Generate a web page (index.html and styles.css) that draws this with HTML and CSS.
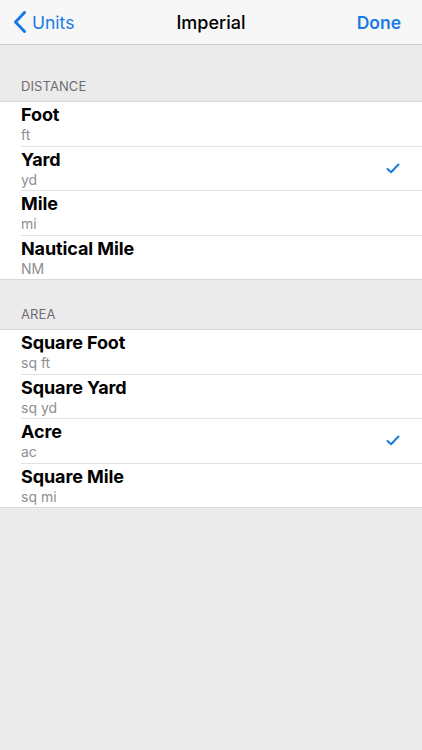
FILE: index.html
```html
<!DOCTYPE html>
<html>
<head>
<meta charset="utf-8">
<link rel="stylesheet" href="styles.css">
</head>
<body>
<div class="nav">
  <div class="back">
    <svg class="chev" width="14" height="22" viewBox="0 0 14 22"><path d="M11.5 1.5 L2.5 11 L11.5 20.5" fill="none" stroke="#1a7be6" stroke-width="3" stroke-linecap="round" stroke-linejoin="round"/></svg>
    <span>Units</span>
  </div>
  <div class="title">Imperial</div>
  <div class="done">Done</div>
</div>
<div class="section first">
  <div class="header">DISTANCE</div>
  <div class="list">
    <div class="row"><div class="txt"><div class="name">Foot</div><div class="abbr">ft</div></div></div>
    <div class="row"><div class="txt"><div class="name">Yard</div><div class="abbr">yd</div></div>
      <svg class="check" width="14" height="11" viewBox="0 0 14 11"><path d="M1.5 6 L5 9.2 L12.5 1.5" fill="none" stroke="#1a7be6" stroke-width="2" stroke-linecap="round" stroke-linejoin="round"/></svg></div>
    <div class="row"><div class="txt"><div class="name">Mile</div><div class="abbr">mi</div></div></div>
    <div class="row"><div class="txt"><div class="name">Nautical Mile</div><div class="abbr">NM</div></div></div>
  </div>
</div>
<div class="section">
  <div class="header">AREA</div>
  <div class="list">
    <div class="row"><div class="txt"><div class="name">Square Foot</div><div class="abbr">sq ft</div></div></div>
    <div class="row"><div class="txt"><div class="name">Square Yard</div><div class="abbr">sq yd</div></div></div>
    <div class="row"><div class="txt"><div class="name">Acre</div><div class="abbr">ac</div></div>
      <svg class="check" width="14" height="11" viewBox="0 0 14 11"><path d="M1.5 6 L5 9.2 L12.5 1.5" fill="none" stroke="#1a7be6" stroke-width="2" stroke-linecap="round" stroke-linejoin="round"/></svg></div>
    <div class="row"><div class="txt"><div class="name">Square Mile</div><div class="abbr">sq mi</div></div></div>
  </div>
</div>
</body>
</html>
```
FILE: styles.css
```css
html, body {
  margin: 0;
  padding: 0;
  background: #ebebeb;
  font-family: Inter, "Liberation Sans", sans-serif;
  width: 422px;
  height: 750px;
  overflow: hidden;
}
.nav {
  height: 44px;
  background: #f7f7f7;
  border-bottom: 1px solid #cfcfcf;
  display: flex;
  align-items: center;
  justify-content: space-between;
  padding: 0 21px 0 13px;
  position: relative;
}
.back {
  display: flex;
  align-items: center;
  gap: 5px;
  color: #1a7be6;
  font-size: 17.5px;
}
.chev { display: block; }
.title {
  position: absolute;
  left: 0;
  right: 0;
  text-align: center;
  font-size: 18px;
  font-weight: 500;
  color: #000;
  pointer-events: none;
}
.done {
  color: #1a7be6;
  font-size: 17.5px;
  font-weight: 600;
}
.section {
  padding-top: 23px;
}
.section.first {
  padding-top: 30px;
}
.header {
  font-size: 13px;
  color: #6d6d72;
  padding: 0 21px 4px;
  line-height: 22px;
  letter-spacing: 0.1px;
}
.list {
  background: #fff;
  border-top: 1px solid #d8d8d8;
  border-bottom: 1px solid #d8d8d8;
}
.row {
  height: 43.5px;
  margin-left: 21px;
  padding-right: 22px;
  display: flex;
  align-items: center;
  justify-content: space-between;
  border-bottom: 1px solid #e2e2e2;
}
.row:last-child {
  border-bottom: none;
}
.txt {
  display: flex;
  flex-direction: column;
  padding-top: 1px;
}
.name {
  font-size: 18px;
  font-weight: 700;
  color: #000;
  line-height: 21px;
  letter-spacing: -0.1px;
}
.abbr {
  font-size: 14px;
  color: #8e8e93;
  line-height: 18px;
  margin-top: 1px;
}
.check { display: block; }
```
